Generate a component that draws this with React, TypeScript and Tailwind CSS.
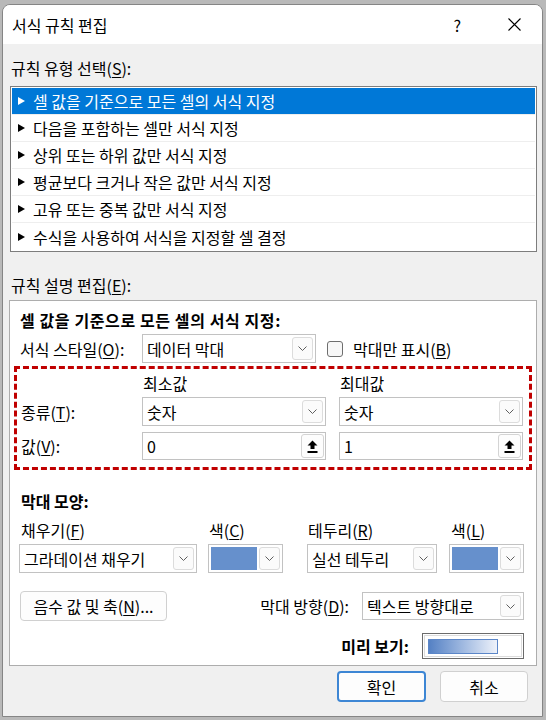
import React from "react";

const Chevron = () => (
  <svg width="9" height="5" viewBox="0 0 9 5">
    <path d="M0.5 0.5 L4.5 4.5 L8.5 0.5" fill="none" stroke="#5f5f5f" strokeWidth="1" />
  </svg>
);

const Key = ({ k }: { k: string }) => <u className="underline underline-offset-2">{k}</u>;

const Combo = ({ text, className = "", swatch = false }: { text?: string; className?: string; swatch?: boolean }) => (
  <div
    className={`flex items-center border border-[#c2c2c2] bg-white py-[2px] pr-[2px] ${swatch ? "pl-[2px]" : "pl-[4px]"} ${className}`}
  >
    {swatch ? (
      <div className="mr-[2px] h-full flex-1 bg-[#6690cc]" />
    ) : (
      <span className="flex-1 whitespace-nowrap leading-[20px]">{text}</span>
    )}
    <div className="flex h-full w-[21px] shrink-0 items-center justify-center rounded-[3px] border border-[#dcdcdc] bg-[#fbfbfb]">
      <Chevron />
    </div>
  </div>
);

const UpArrow = () => (
  <svg width="11" height="13" viewBox="0 0 11 13">
    <path d="M5.5 0.5 L10.5 5.5 H7.5 V9 H3.5 V5.5 H0.5 Z" fill="#000" />
    <rect x="0.5" y="11" width="10" height="2" fill="#000" />
  </svg>
);

const ValueInput = ({ value }: { value: string }) => (
  <div className="flex h-[28px] w-[184px] items-center border border-[#c2c2c2] bg-white py-[1px] pl-[4px] pr-[1px]">
    <span className="flex-1 leading-[20px]">{value}</span>
    <div className="flex h-full w-[23px] items-center justify-center rounded-[3px] border border-[#d4d4d4] bg-[#fdfdfd]">
      <UpArrow />
    </div>
  </div>
);

const rules = [
  "셀 값을 기준으로 모든 셀의 서식 지정",
  "다음을 포함하는 셀만 서식 지정",
  "상위 또는 하위 값만 서식 지정",
  "평균보다 크거나 작은 값만 서식 지정",
  "고유 또는 중복 값만 서식 지정",
  "수식을 사용하여 서식을 지정할 셀 결정",
];

export default function App() {
  return (
    <div className="h-[720px] w-[546px] bg-[#b9b9b9] pb-[3px] pl-[2px] pr-[3px] pt-[4px] font-['Noto_Sans_CJK_KR','Noto_Sans',sans-serif] text-[16px] text-black">
      <div className="flex h-full flex-col overflow-hidden rounded-t-[8px] border border-[#858585] bg-[#f0f0f0]">
        {/* Title bar */}
        <div className="flex h-[39px] shrink-0 items-center bg-white pl-[9px] pr-[21px]">
          <span className="leading-[20px]">서식 규칙 편집</span>
          <span className="ml-auto leading-[20px]">?</span>
          <svg className="ml-[47px]" width="13" height="13" viewBox="0 0 13 13">
            <path d="M0.5 0.5 L12.5 12.5 M12.5 0.5 L0.5 12.5" stroke="#000" strokeWidth="1.1" />
          </svg>
        </div>

        {/* Body */}
        <div className="flex flex-1 flex-col">
          <div className="ml-[8px] mt-[14px] h-[20px] leading-[20px]">
            규칙 유형 선택(<Key k="S" />):
          </div>

          <div className="ml-[7px] mr-[5px] mt-[8px] border border-[#7d7d7d] bg-white p-[1px]">
            {rules.map((r, i) => (
              <div
                key={r}
                className={`flex h-[27px] items-center ${i === 0 ? "bg-[#0078d7] text-white" : ""} ${
                  i < rules.length - 1 ? "border-b border-[#eeeeee]" : ""
                }`}
              >
                <svg className="ml-[6px]" width="7" height="8" viewBox="0 0 7 8">
                  <path d="M0 0 L7 4 L0 8 Z" fill={i === 0 ? "#fff" : "#000"} />
                </svg>
                <span className="ml-[8px] leading-[20px]">{r}</span>
              </div>
            ))}
          </div>

          <div className="ml-[8px] mt-[23px] h-[20px] leading-[20px]">
            규칙 설명 편집(<Key k="E" />):
          </div>

          {/* Description panel */}
          <div className="ml-[6px] mr-[5px] mt-[5px] flex flex-col border border-[#adadad] bg-white pb-[6px]">
            <div className="ml-[10px] mt-[9px] h-[20px] font-bold leading-[20px] tracking-[0.6px]">
              셀 값을 기준으로 모든 셀의 서식 지정:
            </div>

            <div className="mt-[4px] flex h-[29px] items-center">
              <span className="ml-[10px] w-[122px] leading-[20px]">
                서식 스타일(<Key k="O" />):
              </span>
              <Combo text="데이터 막대" className="h-full w-[174px]" />
              <div className="ml-[11px] h-[16px] w-[16px] rounded-[3px] border border-[#6e6e6e] bg-[#f7f7f7]" />
              <span className="ml-[10px] leading-[20px]">
                막대만 표시(<Key k="B" />)
              </span>
            </div>

            {/* Min / max block */}
            <div className="ml-[4px] mt-[3px] w-[518px] border-[3px] border-dashed border-[#c00000] pb-[7px] pl-[4px] pt-[4px]">
              <div className="flex h-[20px]">
                <div className="w-[121px]" />
                <div className="w-[184px] pl-[1px] leading-[20px]">최소값</div>
                <div className="ml-[13px] w-[184px] pl-[1px] leading-[20px]">최대값</div>
              </div>
              <div className="mt-[4px] flex h-[29px] items-center">
                <span className="w-[121px] leading-[20px]">
                  종류(<Key k="T" />):
                </span>
                <Combo text="숫자" className="h-[29px] w-[184px]" />
                <Combo text="숫자" className="ml-[13px] h-[29px] w-[184px]" />
              </div>
              <div className="mt-[6px] flex items-center">
                <span className="w-[121px] leading-[20px]">
                  값(<Key k="V" />):
                </span>
                <ValueInput value="0" />
                <div className="ml-[13px]">
                  <ValueInput value="1" />
                </div>
              </div>
            </div>

            <div className="ml-[11px] mt-[21px] h-[20px] font-bold leading-[20px]">막대 모양:</div>

            <div className="ml-[9px] mt-[9px] flex">
              <div className="flex w-[178px] flex-col">
                <div className="h-[20px] pl-[2px] leading-[20px]">
                  채우기(<Key k="F" />)
                </div>
                <Combo text="그라데이션 채우기" className="mt-[4px] h-[29px]" />
              </div>
              <div className="ml-[11px] flex w-[75px] flex-col">
                <div className="h-[20px] pl-[1px] leading-[20px]">
                  색(<Key k="C" />)
                </div>
                <Combo swatch className="mt-[4px] h-[29px]" />
              </div>
              <div className="ml-[24px] flex w-[130px] flex-col">
                <div className="h-[20px] pl-[1px] leading-[20px]">
                  테두리(<Key k="R" />)
                </div>
                <Combo text="실선 테두리" className="mt-[4px] h-[29px]" />
              </div>
              <div className="ml-[12px] flex w-[75px] flex-col">
                <div className="h-[20px] pl-[2px] leading-[20px]">
                  색(<Key k="L" />)
                </div>
                <Combo swatch className="mt-[4px] h-[29px]" />
              </div>
            </div>

            <div className="mt-[18px] flex h-[30px] items-center">
              <button className="ml-[10px] h-[30px] w-[147px] rounded-[4px] border border-[#d0d0d0] bg-[#fdfdfd] leading-[20px]">
                음수 값 및 축(<Key k="N" />)...
              </button>
              <span className="ml-auto leading-[20px]">
                막대 방향(<Key k="D" />):
              </span>
              <Combo text="텍스트 방향대로" className="ml-[13px] mr-[12px] h-[28px] w-[162px]" />
            </div>

            <div className="mr-[12px] mt-[12px] flex h-[26px] items-center justify-end">
              <span className="font-bold leading-[20px]">미리 보기:</span>
              <div className="ml-[13px] h-[26px] w-[102px] border border-[#6b6b6b] p-[1px]">
                <div className="flex h-full items-center border border-[#dcdcdc] bg-white pl-[3px]">
                  <div className="h-[15px] w-[70px] border border-[#5b86c8] bg-linear-to-r from-[#5581c4] to-[#eef2fa]" />
                </div>
              </div>
            </div>
          </div>

          <div className="mr-[14px] mt-[5px] flex justify-end gap-[14px]">
            <button className="h-[31px] w-[89px] rounded-[4px] border-2 border-[#3d86d4] bg-[#fdfdfd] leading-[20px]">
              확인
            </button>
            <button className="h-[31px] w-[88px] rounded-[4px] border border-[#d0d0d0] bg-[#fdfdfd] leading-[20px]">
              취소
            </button>
          </div>
        </div>
      </div>
    </div>
  );
}
